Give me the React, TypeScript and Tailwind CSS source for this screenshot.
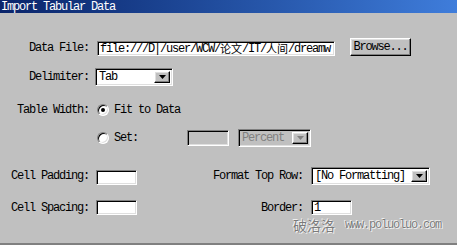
import React from "react";

const font = {
  fontFamily:
    '"Liberation Mono", LiberationMono, Cousine, FreeMono, "Nimbus Mono L", "Nimbus Mono PS", "Courier New", Courier, "DejaVu Sans Mono", monospace',
};
const cjk = { fontFamily: '"Noto Sans CJK SC", sans-serif' };

const sunken =
  "bg-white border border-t-[#808080] border-l-[#808080] border-b-white border-r-white shadow-[inset_1px_1px_0_#000,inset_-1px_-1px_0_#dfdfdf]";
const raised =
  "bg-[#c0c0c0] border border-t-white border-l-white border-b-black border-r-black shadow-[inset_-1px_-1px_0_#808080,inset_1px_1px_0_#dfdfdf]";

function Arrow({ disabled }: { disabled?: boolean }) {
  return (
    <div className={`${raised} w-[16px] h-full flex items-center justify-center`}>
      <svg width="7" height="4" viewBox="0 0 7 4">
        <polygon points="0,0 7,0 3.5,4" fill={disabled ? "#808080" : "#000"} />
      </svg>
    </div>
  );
}

function Select({ text, w, disabled }: { text: string; w: string; disabled?: boolean }) {
  return (
    <div
      className={`${w} h-[18px] flex items-stretch p-[2px] border border-t-[#808080] border-l-[#808080] border-b-white border-r-white shadow-[inset_1px_1px_0_#000,inset_-1px_-1px_0_#dfdfdf] ${
        disabled ? "bg-[#c0c0c0]" : "bg-white"
      }`}
    >
      <div
        className={`flex-1 flex items-center pl-[1px] text-[12px] tracking-[-1.2px] leading-none ${
          disabled ? "text-[#808080]" : "text-black"
        }`}
      >
        {text}
      </div>
      <Arrow disabled={disabled} />
    </div>
  );
}

function Radio({ checked }: { checked?: boolean }) {
  return (
    <div className="w-[12px] h-[12px] rounded-full bg-white border border-t-[#808080] border-l-[#808080] border-b-white border-r-white shadow-[inset_1px_1px_0_#000,inset_-1px_-1px_0_#dfdfdf] flex items-center justify-center">
      {checked && <div className="w-[4px] h-[4px] rounded-full bg-black" />}
    </div>
  );
}

function Label({ children, w = "w-[89px]" }: { children: React.ReactNode; w?: string }) {
  return (
    <div className={`${w} text-right text-[12px] tracking-[-1.2px] leading-none text-black shrink-0`}>{children}</div>
  );
}

export default function App() {
  return (
    <div className="w-[457px] h-[245px] bg-[#c0c0c0] overflow-hidden flex flex-col border-b-2 border-b-[#808080]" style={font}>
      <div className="h-[13px] bg-gradient-to-r from-[#0a246a] to-[#3f7ddb] flex items-center">
        <span className="text-white text-[12px] tracking-[-1.2px] leading-none pl-[1px]">Import Tabular Data</span>
      </div>

      {/* Data File */}
      <div className="mt-[25px] h-[18px] flex items-start">
        <div className="h-[18px] flex items-center mt-[1px]">
          <Label>Data File:</Label>
        </div>
        <div className={`${sunken} ml-[8px] mt-[3px] w-[238px] h-[15px] flex items-center pl-[2px] overflow-hidden whitespace-nowrap text-[12px] tracking-[-1.2px] leading-none`}>
          file:///D|/user/WCW/<span className="tracking-normal text-[11px]" style={cjk}>论文</span>/IT/<span className="tracking-normal text-[11px]" style={cjk}>人间</span>/dreamw
        </div>
        <div className={`${raised} ml-[15px] w-[61px] h-[18px] flex items-center justify-center text-[12px] tracking-[-1.2px] leading-none`}>
          Browse...
        </div>
      </div>

      {/* Delimiter */}
      <div className="mt-[12px] h-[18px] flex items-center">
        <Label>Delimiter:</Label>
        <div className="ml-[6px]">
          <Select text="Tab" w="w-[78px]" />
        </div>
      </div>

      {/* Table width */}
      <div className="mt-[18px] h-[12px] flex items-center">
        <Label>Table Width:</Label>
        <div className="ml-[8px]">
          <Radio checked />
        </div>
        <span className="ml-[5px] text-[12px] tracking-[-1.2px] leading-none">Fit to Data</span>
      </div>

      <div className="mt-[12px] h-[19px] flex items-center">
        <div className="w-[89px] shrink-0" />
        <div className="ml-[8px]">
          <Radio />
        </div>
        <span className="ml-[5px] w-[73px] text-[12px] tracking-[-1.2px] leading-none">Set:</span>
        <div className="w-[42px] h-[16px] bg-[#c0c0c0] border border-t-[#808080] border-l-[#808080] border-b-white border-r-white shadow-[inset_1px_1px_0_#000,inset_-1px_-1px_0_#dfdfdf]" />
        <div className="ml-[9px]">
          <Select text="Percent" w="w-[73px]" disabled />
        </div>
      </div>

      {/* Cell padding / format */}
      <div className="mt-[19px] h-[19px] flex items-center">
        <Label>Cell Padding:</Label>
        <div className={`${sunken} ml-[7px] mt-[3px] w-[41px] h-[15px]`} />
        <Label w="w-[166px]">Format Top Row:</Label>
        <div className="ml-[8px]">
          <Select text="[No Formatting]" w="w-[119px]" />
        </div>
      </div>

      {/* Cell spacing / border */}
      <div className="mt-[15px] h-[15px] flex items-center">
        <Label>Cell Spacing:</Label>
        <div className={`${sunken} ml-[7px] w-[41px] h-[15px]`} />
        <Label w="w-[166px]">Border:</Label>
        <div className={`${sunken} ml-[8px] w-[41px] h-[15px] flex items-center pl-[2px] text-[12px] leading-none`}>1</div>
      </div>

      <div className="mt-[3px] flex items-center pl-[293px] text-[#7a7a7a] [text-shadow:0_0_1px_#fff,1px_1px_0_#eee,-1px_-1px_0_#eee]">
        <span className="text-[14px] leading-none" style={cjk}>破洛洛</span>
        <span className="ml-[10px] text-[12px] tracking-[-1.2px] leading-none">www.poluoluo.com</span>
      </div>
    </div>
  );
}
